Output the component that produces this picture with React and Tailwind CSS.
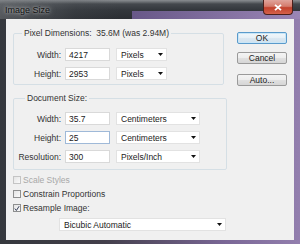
import React from "react";

function Arrow() {
  return (
    <svg width="5" height="3" viewBox="0 0 5 3" className="shrink-0">
      <polygon points="0,0 5,0 2.5,3" fill="#111" />
    </svg>
  );
}

function Select({ value, w }) {
  return (
    <div
      className={`${w} h-[13px] bg-white border border-[#e2e2e2] flex items-center pl-[4px] pr-[3px] text-[#222]`}
    >
      <span className="flex-1 truncate">{value}</span>
      <Arrow />
    </div>
  );
}

function Field({ value, focused }) {
  return (
    <div
      className={`w-[45px] h-[13px] bg-white border ${
        focused ? "border-[#9fb9d8]" : "border-[#d9d9d9]"
      } flex items-center pl-[3px] text-[#222]`}
    >
      {value}
    </div>
  );
}

function Row({ label, value, unit, unitW, focused }) {
  return (
    <div className="flex items-center h-[13px]">
      <div className="w-[48px] text-right pr-[1px] text-[#333]">{label}</div>
      <div className="ml-[3px]">
        <Field value={value} focused={focused} />
      </div>
      <div className="ml-[6px]">
        <Select value={unit} w={unitW} />
      </div>
    </div>
  );
}

function Check({ label, checked, disabled }) {
  return (
    <div className="flex items-center h-[12px]">
      <div
        className={`w-[8px] h-[8px] border ${
          disabled ? "border-[#c4c4c4]" : "border-[#8e8f8f]"
        } bg-[linear-gradient(135deg,#e4e4e4,#fafafa)] flex items-center justify-center`}
      >
        {checked && (
          <svg width="7" height="7" viewBox="0 0 7 7">
            <path d="M1 3.6 L2.8 5.8 L6 0.8" fill="none" stroke="#2c3550" strokeWidth="1.1" />
          </svg>
        )}
      </div>
      <span className={`ml-[2px] ${disabled ? "text-[#a8a8a8]" : "text-[#333]"}`}>{label}</span>
    </div>
  );
}

function Button({ children, def }) {
  return (
    <div
      className={`w-[50px] h-[12px] rounded-[2px] border ${
        def
          ? "border-[#5a9acb] bg-[linear-gradient(#f1f7fb,#e6eff6_50%,#dae7f1_51%,#d0e1ee)] shadow-[inset_0_0_0_1px_#c9e6f7]"
          : "border-[#9a9a9a] bg-[linear-gradient(#f4f4f4,#ececec_50%,#e0e0e0_51%,#d6d6d6)]"
      } flex items-center justify-center text-[#222]`}
    >
      {children}
    </div>
  );
}

export default function App() {
  return (
    <div className="w-[300px] h-[244px] overflow-hidden flex flex-col font-['Liberation_Sans',Arial,sans-serif] text-[8.5px] leading-[10px] [background:linear-gradient(to_right,#35383d,#433f4b_35%,#7a6796_75%,#937fae)]">
      {/* title bar */}
      <div className="h-[19px] flex items-start shrink-0 [background:linear-gradient(90deg,rgba(110,92,145,0.9),rgba(160,138,188,0.95))_right_bottom/56%_8px_no-repeat,linear-gradient(90deg,rgba(120,124,128,0.55),rgba(80,84,88,0.2)_25%,rgba(0,0,0,0)_40%),linear-gradient(#8a8d91,#6a6e72_2px,#44484d_4px,#33373c_10px,#2b2e33)]">
        <span className="mt-[5px] ml-[5px] text-[9px] text-[#101010] [text-shadow:0_0_3px_rgba(230,230,230,0.8),0_0_6px_rgba(200,200,200,0.6)]">
          Image Size
        </span>
        <div className="ml-auto mr-[7px] w-[30px] h-[15px] rounded-b-[4px] border border-t-0 border-[#4b1f1a] bg-[linear-gradient(#e0a49b,#d47b6c_45%,#c2402c_55%,#d5624a)] flex items-center justify-center">
          <svg width="8" height="7" viewBox="0 0 8 7">
            <path d="M1 0.8 L7 6.2 M7 0.8 L1 6.2" stroke="#fff" strokeWidth="1.8" />
          </svg>
        </div>
      </div>

      {/* frame body */}
      <div className="flex-1 flex px-[6px] pb-[4px]">
        <div className="flex-1 bg-[#f0f0f0] flex">
          {/* left column */}
          <div className="ml-[7px] w-[214px] flex flex-col">
            <fieldset className="mt-[9px] w-[211px] border border-[#d5dfe5] rounded-[2px] pt-[10px] pb-[4px] flex flex-col gap-[6px]">
              <legend className="ml-[8px] px-[2px] text-[#333] leading-[10px]">
                Pixel Dimensions:&nbsp; 35.6M (was 2.94M)
              </legend>
              <Row label="Width:" value="4217" unit="Pixels" unitW="w-[51px]" />
              <Row label="Height:" value="2953" unit="Pixels" unitW="w-[51px]" />
            </fieldset>

            <fieldset className="mt-[8px] w-[214px] border border-[#d5dfe5] rounded-[2px] pt-[9px] pb-[6px] flex flex-col gap-[6px]">
              <legend className="ml-[11px] px-[2px] text-[#333] leading-[10px]">
                Document Size:
              </legend>
              <Row label="Width:" value="35.7" unit="Centimeters" unitW="w-[84px]" />
              <Row label="Height:" value="25" unit="Centimeters" unitW="w-[84px]" focused />
              <Row label="Resolution:" value="300" unit="Pixels/Inch" unitW="w-[84px]" />
            </fieldset>

            <div className="mt-[4px] flex flex-col gap-[2px]">
              <Check label="Scale Styles" disabled />
              <Check label="Constrain Proportions" />
              <Check label="Resample Image:" checked />
            </div>

            <div className="mt-[4px] ml-[46px]">
              <Select value="Bicubic Automatic" w="w-[167px]" />
            </div>
          </div>

          {/* buttons */}
          <div className="ml-[10px] flex flex-col">
            <div className="mt-[13px]">
              <Button def>OK</Button>
            </div>
            <div className="mt-[8px]">
              <Button>Cancel</Button>
            </div>
            <div className="mt-[10px]">
              <Button>Auto...</Button>
            </div>
          </div>
        </div>
      </div>
    </div>
  );
}
